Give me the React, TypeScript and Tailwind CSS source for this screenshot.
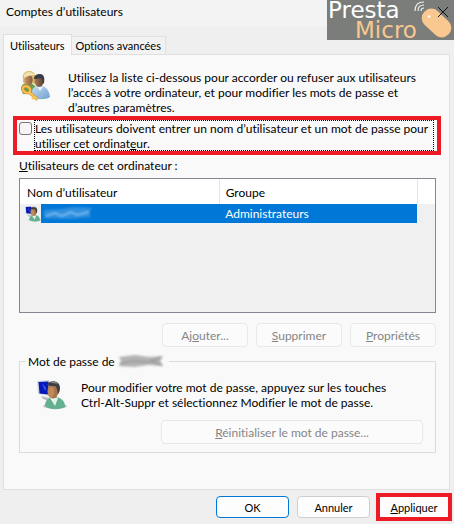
import { useState, type ReactNode } from 'react';

const tabs = [
  { id: 'users', label: 'Utilisateurs' },
  { id: 'advanced', label: 'Options avancées' },
];

function UsersKeyIcon() {
  return (
    <svg viewBox="0 0 30 32" className="w-[30px] h-8 shrink-0" aria-hidden="true">
      <defs>
        <linearGradient id="skin" x1="0" x2="1">
          <stop offset="0" stopColor="#c99a6c" />
          <stop offset="1" stopColor="#8a5c38" />
        </linearGradient>
        <linearGradient id="darkSkin" x1="0" x2="1">
          <stop offset="0" stopColor="#a87e58" />
          <stop offset="1" stopColor="#5b4030" />
        </linearGradient>
        <linearGradient id="shirt" x1="0" x2="1" y2="1">
          <stop offset="0" stopColor="#c3dcf2" />
          <stop offset="1" stopColor="#6f9fd0" />
        </linearGradient>
      </defs>
      <path d="M0 19c0-4 3-6 7-6s7 2 8 5l-2 6H2z" fill="#6f9d4c" />
      <path d="M2 9c-1-5 2-8 6-8s7 2 6 8v5l-4-1-6 1c-2 0-2-3-2-5z" fill="#d9bd6a" />
      <ellipse cx="7.500" cy="10" rx="4.200" ry="5.300" fill="url(#skin)" />
      <path d="M3 5c2-4 8-4 11 0-4 0-8 1-11 3z" fill="#f0e4b0" />
      <path d="M11 22c0-4 3-6 8-6 5 0 9 3 10 11-4 3-13 3-18 0z" fill="url(#shirt)" />
      <path d="m16 17 3 4 3-4z" fill="#eef5fb" />
      <ellipse cx="18" cy="11" rx="4.600" ry="6" fill="url(#darkSkin)" />
      <path d="M13 9c0-4 3-5 6-5 4 0 5 4 4 9l-1 1c0-4-1-5-3-6-2 1-4 1-6 1z" fill="#3a3d46" />
      <g fill="none" stroke="#d9982a" strokeWidth="3">
        <ellipse cx="5.500" cy="19.500" rx="4" ry="3" transform="rotate(35 5.500 19.500)" />
        <path d="m8.500 22.500 8 7" />
      </g>
      <g fill="none" stroke="#f9c35a" strokeWidth="1.800">
        <ellipse cx="5.500" cy="19.500" rx="4" ry="3" transform="rotate(35 5.500 19.500)" />
        <path d="m8.500 22.500 8 7M13 27l-2 2" />
      </g>
    </svg>
  );
}

function UserIcon({ className }: { className: string }) {
  return (
    <svg viewBox="0 0 30 30" className={className} aria-hidden="true">
      <ellipse cx="18" cy="26" rx="12" ry="3" fill="#c4c6c8" />
      <path d="m4 16 9 2 1 4-8-3z" fill="#b9bdc2" />
      <path d="M0 1 12 0v16L1 14z" fill="#cfd6e2" />
      <path d="m1.500 2 10-.5v13l-9-1z" fill="#0718b8" />
      <path d="m5 3 3 8 1-3z" fill="#3c5fdc" />
      <path d="M8 26c0-6 4-9 9-9 6 0 11 3 11 10-5 3-16 3-20-1z" fill="#62b08e" />
      <path d="m13 18 5 8 3-8z" fill="#e5f3ec" />
      <ellipse cx="16" cy="11" rx="5.600" ry="7.500" fill="#a87348" />
      <ellipse cx="14" cy="12" rx="3.200" ry="5.500" fill="#bd8b5c" />
      <path d="M10 5c1-5 13-6 13 3 0 3-1 5-2 6-1-4-1-7-3-8-3 0-6 0-8-1z" fill="#3d3f42" />
      <path d="M13 3c3-2 6-2 8 1-3-1-5-1-8-1z" fill="#858789" />
    </svg>
  );
}

function Brand() {
  return (
    <div className="absolute top-0 right-0 w-[127px] h-10 bg-[#7b7d7a] font-['DejaVu_Sans',sans-serif] text-[23px] leading-5">
      <div className="pl-px text-white">Presta</div>
      <div className="pl-7 text-[#f8c890]">Micro</div>
      <svg viewBox="0 0 46 40" className="absolute top-0 right-0 w-[46px] h-10" aria-hidden="true">
        <rect x="12" y="13.500" width="33" height="19" rx="9" fill="#f8c890" transform="rotate(43 28.500 23)" />
        <circle cx="21" cy="16.500" r="1.300" fill="#fff" />
        <g fill="none" stroke="#eee" strokeWidth="1.200">
          <path d="M13 11c0-2 1-3 3-3" />
          <path d="M10 11c0-4 2-6 6-6" />
          <path d="M7 11c0-6 3-9 9-9" />
        </g>
      </svg>
    </div>
  );
}

function ActionButton({ children, className = '' }: { children: ReactNode; className?: string }) {
  return (
    <button
      type="button"
      disabled
      className={`h-6 rounded border border-[#e8e8e8] bg-[#fbfbfb] text-[#858585] ${className}`}
    >
      {children}
    </button>
  );
}

export default function App() {
  const [tab, setTab] = useState('users');
  const [required, setRequired] = useState(false);

  return (
    <div className="relative min-h-screen flex flex-col bg-[#efefef] text-black font-[Lato,sans-serif] text-[12px] leading-[15px] [font-variant-ligatures:none]">
      <header className="h-[27px] px-[6px] flex items-center justify-between bg-[#f3f3f3]">
        <h1 className="pb-1">Comptes d’utilisateurs</h1>
        <Brand />
        <button type="button" aria-label="Fermer" className="relative pb-1">
          <svg viewBox="0 0 10 10" className="w-[10px] h-[10px]" stroke="#111" strokeWidth="1">
            <path d="m0 0 10 10M10 0 0 10" />
          </svg>
        </button>
      </header>

      <div role="tablist" className="relative z-10 -mb-px mt-[7px] pl-[3px] flex items-end">
        {tabs.map((item) => (
          <button
            key={item.id}
            type="button"
            role="tab"
            aria-selected={tab === item.id}
            onClick={() => setTab(item.id)}
            className={`border border-[#e0e0e0] whitespace-nowrap text-[11px] ${
              tab === item.id ? 'h-[21px] px-[6px] border-b-0 bg-[#f9f9f9]' : 'h-[19px] px-1 border-l-0 bg-[#f2f2f2]'
            }`}
          >
            {item.label}
          </button>
        ))}
      </div>

      <main className="flex-1 ml-[3px] mr-1 pt-[15px] pl-[9px] pr-2 border border-[#e0e0e0] bg-[#f9f9f9]">
        <div className="pl-2 pr-6 flex gap-[17px]">
          <UsersKeyIcon />
          <p>
            Utilisez la liste ci-dessous pour accorder ou refuser aux utilisateurs l’accès à votre ordinateur, et pour
            modifier les mots de passe et d’autres paramètres.
          </p>
        </div>

        <div className="mt-px pl-[2px] pr-[3px] flex gap-[2px] border-4 border-[#ed1c24]">
          <input
            id="required"
            type="checkbox"
            checked={required}
            onChange={(e) => setRequired(e.target.checked)}
            className="mt-[2px] w-[13px] h-[13px] shrink-0 appearance-none rounded-[3px] border border-[#777] bg-[#f5f5f5] checked:bg-[#0078d7]"
          />
          <label htmlFor="required" className="flex-1 h-[31px] border border-dotted border-black">
            Les utilisateurs doivent entrer un nom d’utilisateur et un mot de passe pour utiliser cet ordinat<u>e</u>ur.
          </label>
        </div>

        <div className="pl-[6px] pr-[5px]">
          <h2 id="list-title" className="mt-[3px]">
            <u>U</u>tilisateurs de cet ordinateur :
          </h2>

          <div className="mt-[5px] h-[135px] border border-[#828790] bg-[#f0f0f0]">
            <table aria-labelledby="list-title" className="w-full table-fixed text-left">
              <thead>
                <tr className="h-[25px] bg-white">
                  <th className="w-[48%] pl-[7px] pt-px font-normal border-r border-[#e5e5e5]">Nom d’utilisateur</th>
                  <th className="pl-[6px] pt-px font-normal border-r border-[#e5e5e5]">Groupe</th>
                  <td className="w-[18px]" />
                </tr>
              </thead>
              <tbody>
                <tr className="h-[19px]">
                  <td className="p-0">
                    <div className="h-[19px] pl-[5px] flex items-center">
                      <UserIcon className="w-4 h-4 shrink-0" />
                      <div className="flex-1 h-full bg-[#0078d7]">
                        <svg viewBox="0 0 60 19" className="w-[60px] h-[19px]" aria-hidden="true">
                          <path d="M3 6 20 5l14-2 17 1-3 5 2 4-22 2-25-1z" fill="#2f90e0" className="blur-[1px]" />
                          <path d="m5 12 9-3 7 3 9-4 6 3 12-3" fill="none" stroke="#7ab8ec" strokeWidth="2" className="blur-[1px]" />
                        </svg>
                      </div>
                    </div>
                  </td>
                  <td className="p-0 pl-[6px] bg-[#0078d7] text-white">Administrateurs</td>
                  <td />
                </tr>
              </tbody>
            </table>
          </div>

          <div className="mt-[10px] flex justify-end gap-2">
            <ActionButton className="w-[86px]">Aj<u>o</u>uter...</ActionButton>
            <ActionButton className="w-[86px]"><u>S</u>upprimer</ActionButton>
            <ActionButton className="w-[86px]"><u>P</u>ropriétés</ActionButton>
          </div>

          <fieldset className="mt-[7px] px-3 pb-2 border border-[#dcdcdc]">
            <legend className="-ml-[6px] px-[2px] flex items-center">
              Mot de passe de
              <svg viewBox="0 0 52 15" className="w-[52px] h-[15px]" aria-hidden="true">
                <path d="M4 3 20 1l14 2 14-1-3 5 3 5-15-1-13 2-16-1 2-5z" fill="#b4b4b4" className="blur-[1px]" />
                <path d="m5 10 12-3 16 1 13-4M36 7l11 4" fill="none" stroke="#8c8c8c" className="blur-[1px]" />
              </svg>
            </legend>
            <div className="mt-[11px] pl-[5px] flex gap-[14px]">
              <UserIcon className="w-[30px] h-[30px] shrink-0" />
              <p>
                Pour modifier votre mot de passe, appuyez sur les touches
                <br />
                Ctrl-Alt-Suppr et sélectionnez Modifier le mot de passe.
              </p>
            </div>
            <div className="mt-[10px] flex justify-end">
              <ActionButton className="w-[262px]"><u>R</u>éinitialiser le mot de passe...</ActionButton>
            </div>
          </fieldset>
        </div>
      </main>

      <footer className="py-[3px] pr-[2px] flex items-center justify-end text-[11px]">
        <button type="button" className="mr-2 w-[73px] h-[22px] rounded border border-[#0078d7] bg-[#fdfdfd]">OK</button>
        <button type="button" className="mr-[6px] w-[73px] h-[22px] rounded border border-[#cfcfcf] bg-[#fdfdfd]">Annuler</button>
        <button type="button" className="w-[76px] h-7 border-4 border-[#ed1c24] bg-[#fdfdfd]"><u>A</u>ppliquer</button>
      </footer>
    </div>
  );
}
